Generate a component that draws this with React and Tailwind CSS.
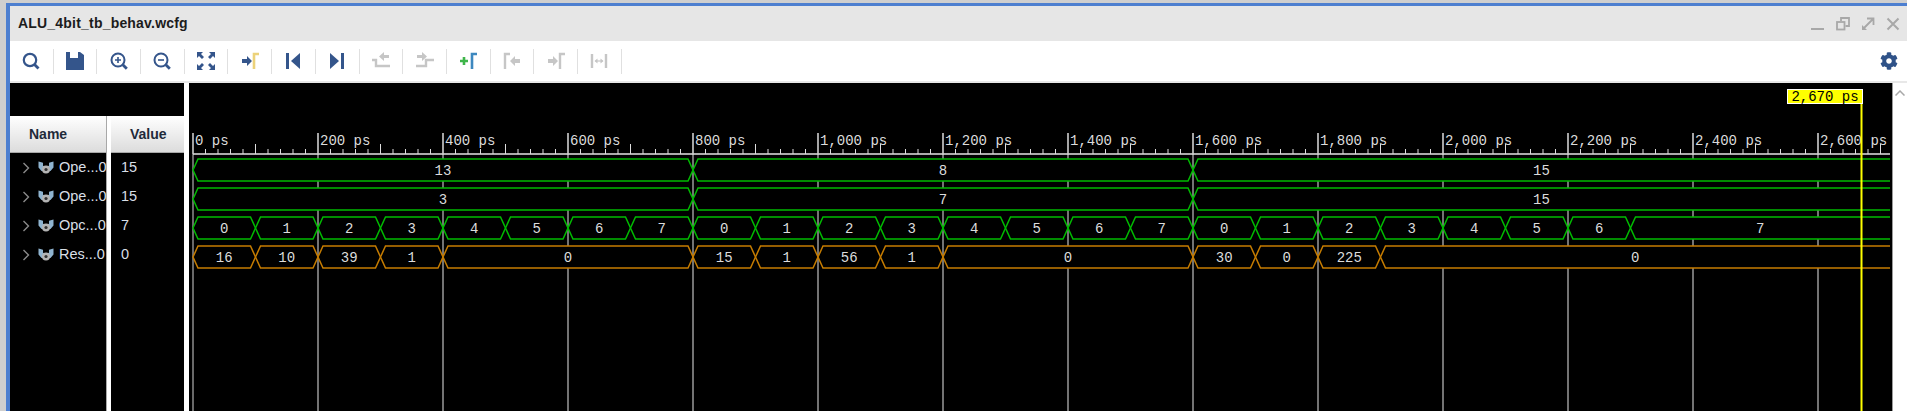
import { FaCog } from 'react-icons/fa';

const NAVY = '#34558b';
const GRAY = '#c6c6c6';
const YELLOW_BRACKET = '#ecd27a';

const x = (ps) => 193 + ps * 0.625;
const END = 2720;

const rows = [
  { top: 159, color: '#00bb00', segs: [[0, 800, '13'], [800, 1600, '8'], [1600, END, '15']] },
  { top: 188, color: '#00bb00', segs: [[0, 800, '3'], [800, 1600, '7'], [1600, END, '15']] },
  {
    top: 217,
    color: '#00bb00',
    segs: [
      ...[0, 1, 2, 3, 4, 5, 6, 7].map((v, i) => [i * 100, i * 100 + 100, String(v)]),
      ...[0, 1, 2, 3, 4, 5, 6, 7].map((v, i) => [800 + i * 100, 900 + i * 100, String(v)]),
      ...[0, 1, 2, 3, 4, 5, 6].map((v, i) => [1600 + i * 100, 1700 + i * 100, String(v)]),
      [2300, END, '7'],
    ],
  },
  {
    top: 246,
    color: '#c67c00',
    segs: [
      [0, 100, '16'], [100, 200, '10'], [200, 300, '39'], [300, 400, '1'], [400, 800, '0'],
      [800, 900, '15'], [900, 1000, '1'], [1000, 1100, '56'], [1100, 1200, '1'], [1200, 1600, '0'],
      [1600, 1700, '30'], [1700, 1800, '0'], [1800, 1900, '225'], [1900, END, '0'],
    ],
  },
];

const signals = [
  { name: 'Ope...0', value: '15' },
  { name: 'Ope...0', value: '15' },
  { name: 'Opc...0', value: '7' },
  { name: 'Res...0', value: '0' },
];

const Ico = ({ children }) => (
  <svg width="20" height="20" viewBox="0 0 20 20">{children}</svg>
);

const arrowR = (fill) => <path d="M2 8h5V5l5 5-5 5v-3H2z" fill={fill} />;

const tools = [
  <Ico>
    <circle cx="9" cy="9" r="6.2" fill="none" stroke={NAVY} strokeWidth="2.2" />
    <path d="M13.5 13.5l4 4" stroke={NAVY} strokeWidth="2.8" />
  </Ico>,
  <Ico>
    <path d="M1 1h4v6h8V1h2l4 3v15H1z" fill={NAVY} />
  </Ico>,
  <Ico>
    <circle cx="9" cy="9" r="6.5" fill="none" stroke={NAVY} strokeWidth="2" />
    <path d="M6 9h6M9 6v6" stroke={NAVY} strokeWidth="1.6" />
    <path d="M13.8 13.8l4 4" stroke={NAVY} strokeWidth="2.8" />
  </Ico>,
  <Ico>
    <circle cx="9" cy="9" r="6.5" fill="none" stroke={NAVY} strokeWidth="2" />
    <path d="M6 9h6" stroke={NAVY} strokeWidth="1.6" />
    <path d="M13.8 13.8l4 4" stroke={NAVY} strokeWidth="2.8" />
  </Ico>,
  <Ico>
    <path d="M1 1h6L5 3l3 3-2 2-3-3-2 2z" fill={NAVY} />
    <path d="M19 1h-6l2 2-3 3 2 2 3-3 2 2z" fill={NAVY} />
    <path d="M1 19h6l-2-2 3-3-2-2-3 3-2-2z" fill={NAVY} />
    <path d="M19 19h-6l2-2-3-3 2-2 3 3 2-2z" fill={NAVY} />
  </Ico>,
  <Ico>
    {arrowR(NAVY)}
    <path d="M14 18V3h5" fill="none" stroke={YELLOW_BRACKET} strokeWidth="2.6" />
  </Ico>,
  <Ico>
    <rect x="3" y="2" width="3" height="16" fill={NAVY} />
    <path d="M17 2L8 10l9 8z" fill={NAVY} />
  </Ico>,
  <Ico>
    <rect x="14" y="2" width="3" height="16" fill={NAVY} />
    <path d="M3 2l9 8-9 8z" fill={NAVY} />
  </Ico>,
  <Ico>
    <path d="M1 9h4v6h14" fill="none" stroke={GRAY} strokeWidth="2.4" />
    <path d="M18 7h-5v3L8 5.5 13 1v3h5z" fill={GRAY} />
  </Ico>,
  <Ico>
    <path d="M1 15h10V9h8" fill="none" stroke={GRAY} strokeWidth="2.4" />
    <path d="M2 4h5V1l5 4.5L7 10V7H2z" fill={GRAY} />
  </Ico>,
  <Ico>
    <path d="M2 10h8M6 6v8" stroke="#3fb54a" strokeWidth="2.6" />
    <path d="M14 18V3h5" fill="none" stroke="#3d88bf" strokeWidth="2.6" />
  </Ico>,
  <Ico>
    <path d="M3 18V3h5" fill="none" stroke={GRAY} strokeWidth="2.4" />
    <path d="M18 8h-5V5l-5 5 5 5v-3h5z" fill={GRAY} />
  </Ico>,
  <Ico>
    {arrowR(GRAY)}
    <path d="M14 18V3h5" fill="none" stroke={GRAY} strokeWidth="2.4" />
  </Ico>,
  <Ico>
    <path d="M3 3v14M17 3v14" stroke={GRAY} strokeWidth="2.4" />
    <path d="M6 10h8" stroke={GRAY} strokeWidth="1.2" />
    <path d="M5.5 10l3-2.5v5zM14.5 10l-3-2.5v5z" fill={GRAY} />
  </Ico>,
];

const BusIcon = () => (
  <svg width="16" height="16" viewBox="0 0 16 16" className="shrink-0">
    <path d="M0.5 1.5l4.5 1.2v3l3 1 3-1v-3l4.5-1.2v6l-3 3.5h-9l-3-3.5z" fill="#8fb4d0" />
    <circle cx="8" cy="9.5" r="4" fill="#b4b4b4" />
    <circle cx="8" cy="9.5" r="1.6" fill="#333" />
  </svg>
);

const Chevron = () => (
  <svg width="8" height="12" viewBox="0 0 8 12" className="shrink-0">
    <path d="M1.5 1l5 5-5 5" fill="none" stroke="#8a8a8a" strokeWidth="1.4" />
  </svg>
);

const WinButton = ({ children }) => (
  <div className="w-[25px] flex justify-center">
    <svg width="16" height="16" viewBox="0 0 16 16" fill="none" stroke="#a8a8a8" strokeWidth="1.8">
      {children}
    </svg>
  </div>
);

const Wave = () => (
  <svg width="1703" height="328" className="block font-['Liberation_Mono',monospace]">
    <g transform="translate(-189 -83)">
      {/* grid */}
      {[...Array(14)].map((_, i) => (
        <line key={i} x1={193 + i * 125} x2={193 + i * 125} y1={133} y2={411} stroke={i === 0 ? '#8c8c8c' : '#9a9a9a'} strokeWidth="1.5" />
      ))}

      {/* ruler */}
      <line x1="193" x2="1890" y1="154" y2="154" stroke="#e4e4e4" strokeWidth="1.5" />
      {[...Array(136)].map((_, i) => {
        const tx = 193 + i * 12.5;
        if (i % 10 === 0) return <line key={i} x1={tx} x2={tx} y1={133} y2={154} stroke="#c8c8c8" strokeWidth="1.2" />;
        return <line key={i} x1={tx} x2={tx} y1={i % 5 === 0 ? 144 : 149} y2={154} stroke="#dedede" />;
      })}
      {[...Array(14)].map((_, i) => (
        <text key={i} x={195 + i * 125} y={145} fontSize="14" fill="#dcdcdc">
          {(i * 200).toLocaleString('en-US')} ps
        </text>
      ))}

      {/* buses */}
      {rows.map((row) => {
        const t = row.top;
        const b = t + 22;
        const m = t + 11;
        return row.segs.map(([from, to, label], i) => {
          const x0 = x(from);
          const last = to === END;
          const x1 = last ? 1890 : x(to);
          const d = 5;
          const stroke = last
            ? `M1890 ${t}H${x0 + d}L${x0} ${m}L${x0 + d} ${b}H1890`
            : `M${x0} ${m}L${x0 + d} ${t}H${x1 - d}L${x1} ${m}L${x1 - d} ${b}H${x0 + d}Z`;
          return (
            <g key={i}>
              <path d={last ? `${stroke}Z` : stroke} fill="#000" />
              <path d={stroke} fill="none" stroke={row.color} strokeWidth="1.5" />
              <text x={(x0 + x1) / 2} y={t + 16} fontSize="14" textAnchor="middle" fill="#dcdcdc">
                {label}
              </text>
            </g>
          );
        });
      })}

      {/* cursor */}
      <line x1="1861.5" x2="1861.5" y1="104" y2="411" stroke="#ffff00" strokeWidth="2" />
    </g>
  </svg>
);

export default function App() {
  return (
    <div className="h-[411px] w-full overflow-hidden bg-[#cfcfcf] pl-[6px] pt-[3px] font-['Liberation_Sans',Arial,sans-serif]">
      <div className="h-full flex flex-col border-l-4 border-t-[3px] border-[#4d7fd0]">
        {/* Title bar */}
        <div className="h-[35px] shrink-0 flex items-center bg-[#e6e6e6] pl-2 pr-[2px]">
          <span className="text-[14px] font-bold text-[#1c1c1c] tracking-[0.2px]">ALU_4bit_tb_behav.wcfg</span>
          <div className="ml-auto flex items-center">
            <WinButton><path d="M1 13h13" strokeWidth="2" /></WinButton>
            <WinButton>
              <rect x="2" y="6" width="7.5" height="7.5" />
              <path d="M6 5V2h8v8h-3.5" />
            </WinButton>
            <WinButton>
              <path d="M7 2.5h6.5V9M13 3L3 13" />
              <path d="M2 9v5h5z" fill="#a8a8a8" stroke="none" />
            </WinButton>
            <WinButton><path d="M2.5 2.5l11 11M13.5 2.5l-11 11" strokeWidth="2" /></WinButton>
          </div>
        </div>

        {/* Toolbar */}
        <div className="h-[40px] shrink-0 flex items-center bg-white">
          {tools.map((icon, i) => (
            <div key={i} className="w-[43.7px] h-[25px] flex items-center justify-center border-r border-[#e0e0e0]">
              {icon}
            </div>
          ))}
          <div className="ml-auto pr-[9px] flex items-center">
            <FaCog className="w-[18px] h-[18px] text-[#2f5288]" />
          </div>
        </div>
        <div className="h-[2px] shrink-0 bg-[#e8e8e8]" />

        {/* Main */}
        <div className="flex-1 flex min-h-0">
          <div className="w-[174px] shrink-0 flex flex-col bg-black">
            <div className="h-[33px] shrink-0" />
            <div className="flex-1 flex min-h-0">
              {/* Name column */}
              <div className="w-[96px] shrink-0 flex flex-col overflow-hidden">
                <div className="h-[37px] shrink-0 flex items-center pl-[19px] text-[14px] font-bold text-[#1f2a3a] bg-gradient-to-b from-white to-[#dcdcdc] border-b border-[#a8a8a8]">
                  Name
                </div>
                {signals.map((s, i) => (
                  <div key={i} className="h-[29px] shrink-0 flex items-center whitespace-nowrap text-[14.5px] text-[#d8dfe6]">
                    <div className="ml-[12px] mr-[8px]"><Chevron /></div>
                    <BusIcon />
                    <span className="ml-[5px]">{s.name}</span>
                  </div>
                ))}
              </div>
              <div className="w-[5px] shrink-0 bg-white border-l border-[#a8a8a8]" />
              {/* Value column */}
              <div className="w-[73px] shrink-0 flex flex-col">
                <div className="h-[37px] shrink-0 flex items-center pl-[19px] text-[14px] font-bold text-[#1f2a3a] bg-gradient-to-b from-white to-[#dcdcdc] border-b border-[#a8a8a8]">
                  Value
                </div>
                {signals.map((s, i) => (
                  <div key={i} className="h-[29px] shrink-0 flex items-center pl-[10px] text-[14.5px] text-[#d8dfe6]">
                    {s.value}
                  </div>
                ))}
              </div>
            </div>
          </div>
          <div className="w-[5px] shrink-0 bg-white" />

          {/* Wave canvas */}
          <div className="relative flex-1 min-w-0 bg-black overflow-hidden">
            <Wave />
            <div className="absolute left-[1598px] top-[6px] w-[76px] h-[15px] flex items-center justify-center bg-[#ffff00] border border-white text-[14px] leading-none text-black font-['Liberation_Mono',monospace]">
              2,670 ps
            </div>
          </div>

          {/* Scrollbar */}
          <div className="w-[15px] shrink-0 bg-white border-l border-[#9a9a9a] flex justify-center pt-[7px]">
            <svg width="10" height="6" viewBox="0 0 10 6">
              <path d="M0.5 5.5L5 1l4.5 4.5" fill="none" stroke="#a8a8a8" strokeWidth="1.5" />
            </svg>
          </div>
        </div>
      </div>
    </div>
  );
}
